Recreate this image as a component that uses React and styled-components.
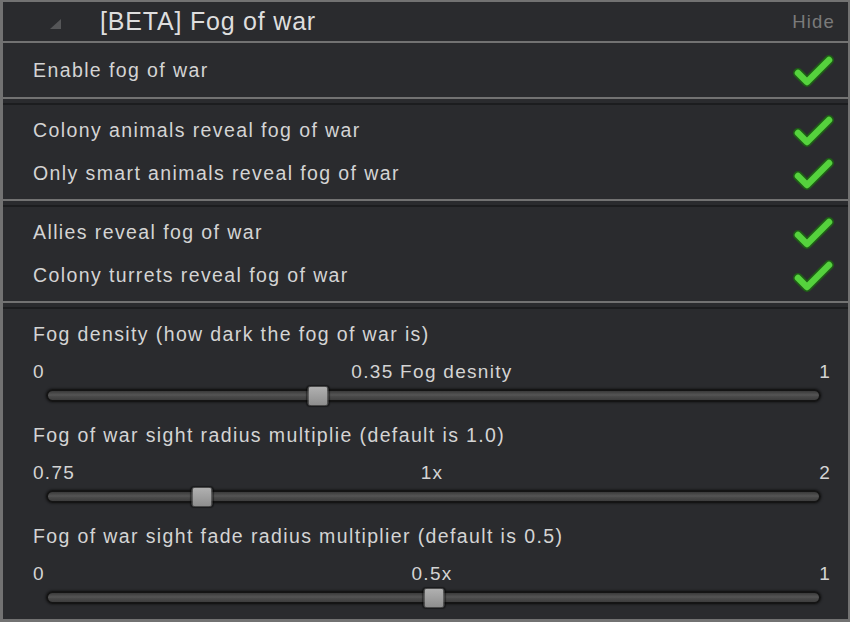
import React from "react";
import styled, { createGlobalStyle } from "styled-components";

const GlobalStyle = createGlobalStyle`
  html, body {
    margin: 0;
    padding: 0;
    background: #2a2b2e;
  }
  * {
    box-sizing: border-box;
  }
`;

const Panel = styled.div`
  width: 850px;
  height: 622px;
  background: #2a2b2e;
  border: 2px solid #727272;
  border-left-width: 3px;
  border-bottom-width: 3px;
  display: flex;
  flex-direction: column;
  font-family: "Liberation Sans", Arial, sans-serif;
  color: #d4d4d4;
  overflow: hidden;
`;

const Header = styled.div`
  flex-shrink: 0;
  height: 41px;
  display: flex;
  align-items: center;
  padding: 0 13px 0 47px;
  border-bottom: 2px solid #727272;
`;

const Arrow = styled.span`
  width: 0;
  height: 0;
  border-left: 11px solid transparent;
  border-bottom: 10px solid #555658;
  margin-right: 39px;
  margin-top: 4px;
`;

const Title = styled.span`
  font-size: 25px;
  letter-spacing: 0.8px;
  color: #dedede;
  flex: 1;
`;

const HideLink = styled.span`
  font-size: 18.5px;
  letter-spacing: 1.2px;
  color: #7a7a7a;
`;

const Section = styled.div`
  flex-shrink: 0;
  padding: ${(p) => (p.$single ? "6px 13px 5px 30px" : "4px 13px 4px 30px")};
  border-bottom: ${(p) => (p.$last ? "none" : "2px solid #727272")};
  box-shadow: ${(p) => (p.$last ? "none" : "0 4px 0 0 #2a2b2e, 0 6px 0 0 #1c1d1f")};
  margin-bottom: ${(p) => (p.$last ? "0" : "6px")};
  flex-grow: ${(p) => (p.$last ? "1" : "0")};
  ${(p) => p.$last && "padding-top: 5px;"}
`;

const Row = styled.div`
  height: 43px;
  display: flex;
  align-items: center;
  justify-content: space-between;
`;

const Label = styled.span`
  font-size: 19.5px;
  letter-spacing: 1.4px;
`;

const SliderBlock = styled.div`
  padding-right: 4px;
  margin-bottom: 13px;
`;

const SliderTitle = styled.div`
  height: 40px;
  display: flex;
  align-items: center;
  font-size: 19.5px;
  letter-spacing: 1.38px;
`;

const Values = styled.div`
  height: 35px;
  display: grid;
  grid-template-columns: 1fr auto 1fr;
  align-items: center;
  font-size: 19px;
  letter-spacing: 1.3px;

  span:last-child {
    text-align: right;
  }
`;

const Track = styled.div`
  position: relative;
  height: 13px;
  margin: 0 10px 0 13px;
  border-radius: 7px;
  background: linear-gradient(#3a3a3a, #555 45%, #4a4a4a 60%, #3d3d3d);
  border: 2px solid #141414;
  box-shadow: 0 0 2px 1px rgba(0, 0, 0, 0.35);
`;

const Thumb = styled.div`
  position: absolute;
  top: 50%;
  width: 21px;
  height: 20px;
  transform: translate(-50%, -50%);
  border-radius: 3px;
  background: linear-gradient(#b0b0b0, #8e8e8e);
  border: 1px solid #4a4a4a;
  box-shadow: 0 0 1px 1px rgba(0, 0, 0, 0.4);
`;

const Check = () => (
  <svg width="43" height="37" viewBox="0 0 43 37">
    <polyline
      points="6,21 15,30 37,8"
      fill="none"
      stroke="#1f5c17"
      strokeWidth="10"
      strokeLinecap="round"
      strokeLinejoin="round"
    />
    <polyline
      points="6,21 15,30 37,8"
      fill="none"
      stroke="#55d23d"
      strokeWidth="6.5"
      strokeLinecap="round"
      strokeLinejoin="round"
    />
  </svg>
);

const Slider = ({ title, min, max, value, center }) => {
  const pct = ((parseFloat(value) - parseFloat(min)) / (parseFloat(max) - parseFloat(min))) * 100;
  return (
    <SliderBlock>
      <SliderTitle>{title}</SliderTitle>
      <Values>
        <span>{min}</span>
        <span>{center}</span>
        <span>{max}</span>
      </Values>
      <Track>
        <Thumb style={{ left: `${pct}%` }} />
      </Track>
    </SliderBlock>
  );
};

const groups = [
  ["Enable fog of war"],
  ["Colony animals reveal fog of war", "Only smart animals reveal fog of war"],
  ["Allies reveal fog of war", "Colony turrets reveal fog of war"],
];

const sliders = [
  { title: "Fog density (how dark the fog of war is)", min: "0", max: "1", value: 0.35, center: "0.35 Fog desnity" },
  { title: "Fog of war sight radius multiplie (default is 1.0)", min: "0.75", max: "2", value: 1, center: "1x" },
  { title: "Fog of war sight fade radius multiplier (default is 0.5)", min: "0", max: "1", value: 0.5, center: "0.5x" },
];

export default function App() {
  return (
    <>
      <GlobalStyle />
      <Panel>
        <Header>
          <Arrow />
          <Title>[BETA] Fog of war</Title>
          <HideLink>Hide</HideLink>
        </Header>
        {groups.map((rows, i) => (
          <Section key={i} $single={rows.length === 1}>
            {rows.map((text) => (
              <Row key={text}>
                <Label>{text}</Label>
                <Check />
              </Row>
            ))}
          </Section>
        ))}
        <Section $last>
          {sliders.map((s) => (
            <Slider key={s.title} {...s} />
          ))}
        </Section>
      </Panel>
    </>
  );
}
